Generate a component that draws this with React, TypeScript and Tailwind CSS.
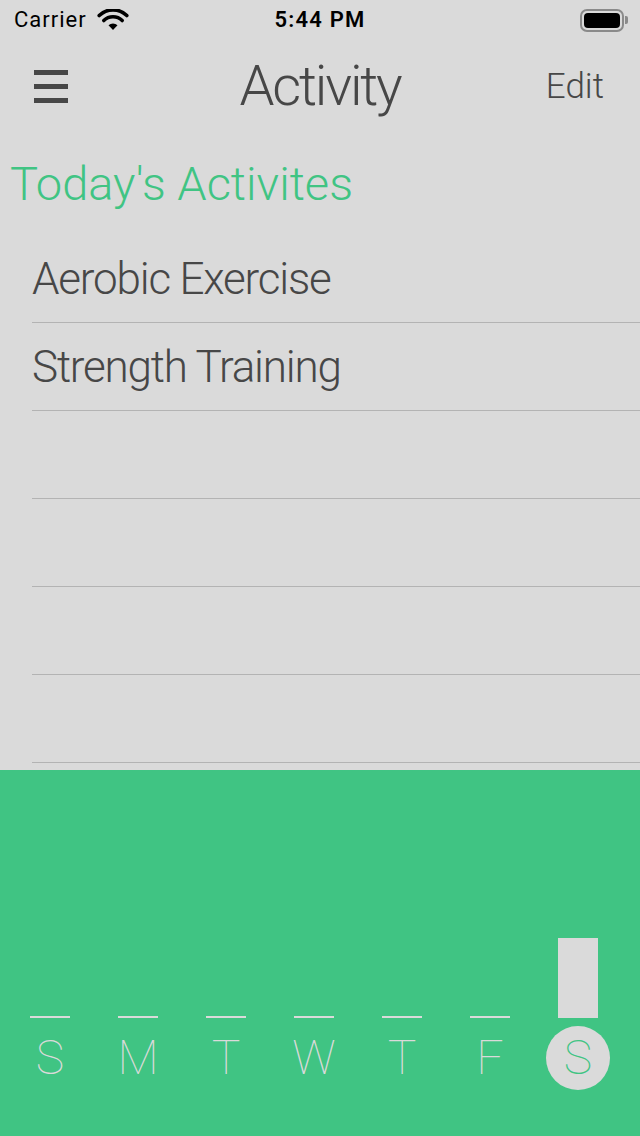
const rows = ["Aerobic Exercise", "Strength Training", "", "", "", ""];

const days = [
  { label: "S", value: 0 },
  { label: "M", value: 0 },
  { label: "T", value: 0 },
  { label: "W", value: 0 },
  { label: "T", value: 0 },
  { label: "F", value: 0 },
  { label: "S", value: 80, today: true },
];

function Wifi() {
  return (
    <svg width="32" height="22" viewBox="0 0 32 22">
      <path d="M16 21 L11.5 16.2 A6.6 6.6 0 0 1 20.5 16.2 Z" fill="#000" />
      <path
        d="M6.8 11.6 A13 13 0 0 1 25.2 11.6"
        stroke="#000"
        strokeWidth="3.6"
        fill="none"
        strokeLinecap="round"
      />
      <path
        d="M2.2 6.6 A19.5 19.5 0 0 1 29.8 6.6"
        stroke="#000"
        strokeWidth="3.6"
        fill="none"
        strokeLinecap="round"
      />
    </svg>
  );
}

function Battery() {
  return (
    <div className="flex items-center">
      <div className="flex h-[23px] w-[44px] items-center rounded-[7px] border-2 border-[#8a8a8a] p-[2px]">
        <div className="h-full w-full rounded-[4px] bg-black" />
      </div>
      <div className="ml-[1px] h-[8px] w-[3px] rounded-r-[2px] bg-[#8a8a8a]" />
    </div>
  );
}

export default function App() {
  return (
    <main
      className="flex h-[1136px] w-[640px] flex-col overflow-hidden bg-[#dadada]"
      style={{ fontFamily: "Roboto, 'Liberation Sans', sans-serif" }}
    >
      {/* status bar */}
      <div className="relative flex h-[40px] items-center px-[14px]">
        <span className="text-[22px] leading-none tracking-[1px] text-black">Carrier</span>
        <span className="ml-[10px]">
          <Wifi />
        </span>
        <span className="absolute left-1/2 -translate-x-1/2 text-[22px] font-semibold leading-none tracking-[1.2px] text-black">
          5:44 PM
        </span>
        <span className="ml-auto mr-[-2px]">
          <Battery />
        </span>
      </div>

      {/* nav bar */}
      <div className="relative flex h-[92px] items-center px-[34px]">
        <div className="flex w-[34px] flex-col gap-[9px]">
          <div className="h-[5px] bg-[#474747]" />
          <div className="h-[5px] bg-[#474747]" />
          <div className="h-[5px] bg-[#474747]" />
        </div>
        <h1 className="absolute left-1/2 -translate-x-1/2 text-[56px] font-light leading-none tracking-[-2.2px] text-[#474747]">
          Activity
        </h1>
        <span className="ml-auto mr-[2px] text-[35px] font-light leading-none text-[#474747]">
          Edit
        </span>
      </div>

      {/* heading */}
      <div className="flex h-[103px] items-center pl-[10px]">
        <h2 className="text-[47px] font-light leading-none text-[#40c483]">
          Today's Activites
        </h2>
      </div>

      {/* list */}
      <ul className="ml-[32px]">
        {rows.map((r, i) => (
          <li
            key={i}
            className="flex h-[88px] items-center border-b border-[#b3b3b3] text-[44px] font-light leading-none tracking-[-1.2px] text-[#474747]"
          >
            {r}
          </li>
        ))}
      </ul>

      {/* week chart */}
      <div className="mt-auto flex h-[366px] flex-col justify-end bg-[#40c483] pb-[46px]">
        <div className="grid grid-cols-[repeat(7,88px)] items-end px-[6px]">
          {days.map((d, i) => (
            <div key={i} className="flex flex-col items-center">
              <div
                className="w-[40px] bg-[#dadada]"
                style={{ height: Math.max(d.value, 2) }}
              />
              <div
                className={
                  "mt-[8px] flex h-[64px] w-[64px] items-center justify-center rounded-full text-[48px] font-thin leading-none " +
                  (d.today ? "bg-[#dadada] text-[#40c483]" : "text-[#dadada]")
                }
              >
                {d.label}
              </div>
            </div>
          ))}
        </div>
      </div>
    </main>
  );
}
